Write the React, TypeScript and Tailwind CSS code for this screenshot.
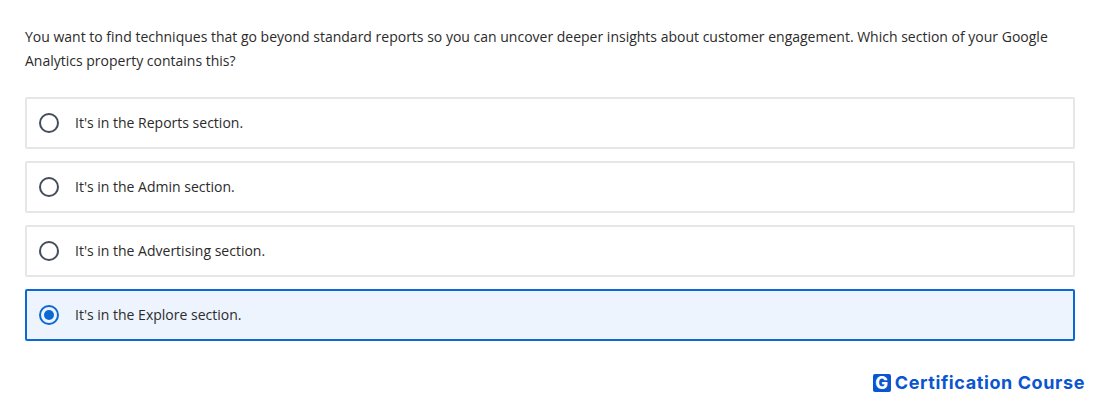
import React from "react";

const options = [
  { label: "It's in the Reports section.", selected: false },
  { label: "It's in the Admin section.", selected: false },
  { label: "It's in the Advertising section.", selected: false },
  { label: "It's in the Explore section.", selected: true },
];

function Radio({ selected }: { selected: boolean }) {
  const color = selected ? "#0b68d4" : "#454d5d";
  return (
    <svg width="20" height="20" viewBox="0 0 20 20" className="shrink-0">
      <circle cx="10" cy="10" r="9" fill="none" stroke={color} strokeWidth="2" />
      {selected && <circle cx="10" cy="10" r="5" fill={color} />}
    </svg>
  );
}

export default function App() {
  return (
    <div className="w-[1100px] h-[401px] bg-white overflow-hidden px-[25px] pt-[25px] font-['Open_Sans',sans-serif] text-[#2b2b2b]">
      <p className="text-[14px] leading-[24px] w-[1050px]">
        You want to find techniques that go beyond standard reports so you can uncover deeper insights about customer engagement. Which section of your Google Analytics property contains this?
      </p>
      <div className="mt-[24px] flex flex-col gap-[12px] w-[1050px]">
        {options.map((o) => (
          <div
            key={o.label}
            className={
              o.selected
                ? "h-[52px] flex items-center rounded-[2px] border-2 border-[#0b68d4] bg-[#edf4fd] pl-[12px]"
                : "h-[52px] flex items-center rounded-[2px] border-2 border-[#e6e6e6] bg-white pl-[12px]"
            }
          >
            <Radio selected={o.selected} />
            <span className="ml-[16px] text-[14px] leading-[24px]">{o.label}</span>
          </div>
        ))}
      </div>
      <div className="mt-[32px] flex items-center justify-end w-[1060px] gap-[4px]">
        <span className="w-[18px] h-[18px] rounded-[2px] bg-[#0a55d0] text-white flex items-center justify-center font-['Inter',sans-serif] font-extrabold text-[17px] leading-none">G</span>
        <span className="font-['Inter',sans-serif] font-bold text-[18px] leading-[20px] tracking-[0.6px] text-[#0a55d0]">Certification Course</span>
      </div>
    </div>
  );
}
